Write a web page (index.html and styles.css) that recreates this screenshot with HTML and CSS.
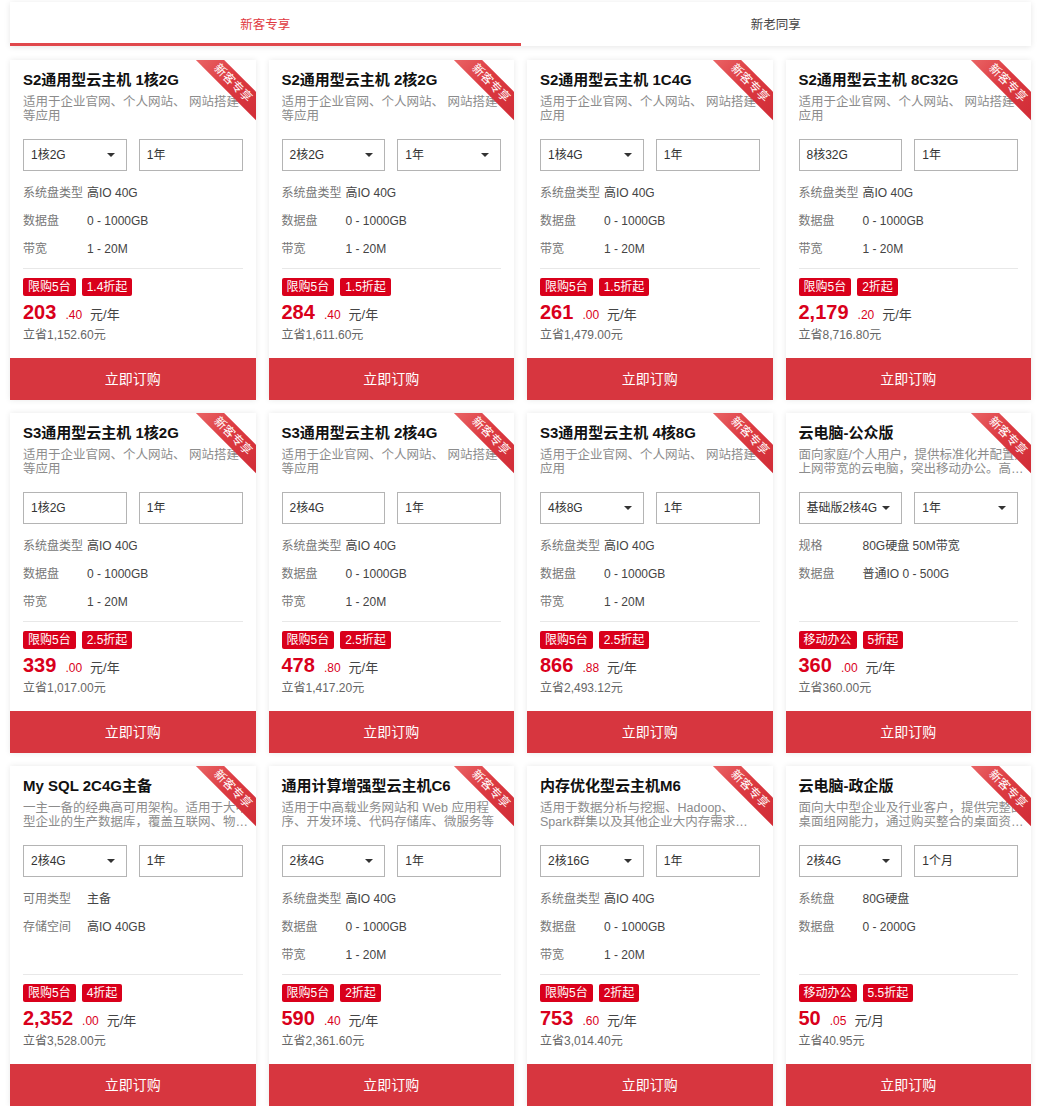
FILE: index.html
```html
<!DOCTYPE html>
<html lang="zh-CN">
<head>
    <meta charset="UTF-8">
    <meta name="viewport" content="width=device-width, initial-scale=1.0">
    <title>云产品特惠</title>
    <link rel="stylesheet" href="styles.css">
</head>
<body>
    <div class="container">
        <!-- 标签页 -->
        <div class="tabs">
            <div class="tab active">新客专享</div>
            <div class="tab">新老同享</div>
        </div>

        <div class="product-grid">
            <!-- S2 1核2G -->
            <div class="card">
                <span class="ribbon">新客专享</span>
                <div class="card-body">
                    <h3 class="card-title">S2通用型云主机 1核2G</h3>
                    <p class="card-desc">适用于企业官网、个人网站、 网站搭建等应用</p>
                    <div class="selects">
                        <div class="select has-arrow">1核2G</div>
                        <div class="select">1年</div>
                    </div>
                    <div class="specs">
                        <div class="spec"><span class="spec-label">系统盘类型</span><span class="spec-value">高IO 40G</span></div>
                        <div class="spec"><span class="spec-label">数据盘</span><span class="spec-value">0 - 1000GB</span></div>
                        <div class="spec"><span class="spec-label">带宽</span><span class="spec-value">1 - 20M</span></div>
                    </div>
                    <div class="price-box">
                        <div class="tags"><span class="tag">限购5台</span><span class="tag">1.4折起</span></div>
                        <div class="price"><span class="price-int">203</span><span class="price-dec">.40</span><span class="price-unit">元/年</span></div>
                        <div class="save">立省1,152.60元</div>
                    </div>
                </div>
                <a class="buy-btn" href="#">立即订购</a>
            </div>

            <!-- S2 2核2G -->
            <div class="card">
                <span class="ribbon">新客专享</span>
                <div class="card-body">
                    <h3 class="card-title">S2通用型云主机 2核2G</h3>
                    <p class="card-desc">适用于企业官网、个人网站、 网站搭建等应用</p>
                    <div class="selects">
                        <div class="select has-arrow">2核2G</div>
                        <div class="select has-arrow">1年</div>
                    </div>
                    <div class="specs">
                        <div class="spec"><span class="spec-label">系统盘类型</span><span class="spec-value">高IO 40G</span></div>
                        <div class="spec"><span class="spec-label">数据盘</span><span class="spec-value">0 - 1000GB</span></div>
                        <div class="spec"><span class="spec-label">带宽</span><span class="spec-value">1 - 20M</span></div>
                    </div>
                    <div class="price-box">
                        <div class="tags"><span class="tag">限购5台</span><span class="tag">1.5折起</span></div>
                        <div class="price"><span class="price-int">284</span><span class="price-dec">.40</span><span class="price-unit">元/年</span></div>
                        <div class="save">立省1,611.60元</div>
                    </div>
                </div>
                <a class="buy-btn" href="#">立即订购</a>
            </div>

            <!-- S2 1C4G -->
            <div class="card">
                <span class="ribbon">新客专享</span>
                <div class="card-body">
                    <h3 class="card-title">S2通用型云主机 1C4G</h3>
                    <p class="card-desc wide">适用于企业官网、个人网站、 网站搭建等应用</p>
                    <div class="selects">
                        <div class="select has-arrow">1核4G</div>
                        <div class="select">1年</div>
                    </div>
                    <div class="specs">
                        <div class="spec"><span class="spec-label">系统盘类型</span><span class="spec-value">高IO 40G</span></div>
                        <div class="spec"><span class="spec-label">数据盘</span><span class="spec-value">0 - 1000GB</span></div>
                        <div class="spec"><span class="spec-label">带宽</span><span class="spec-value">1 - 20M</span></div>
                    </div>
                    <div class="price-box">
                        <div class="tags"><span class="tag">限购5台</span><span class="tag">1.5折起</span></div>
                        <div class="price"><span class="price-int">261</span><span class="price-dec">.00</span><span class="price-unit">元/年</span></div>
                        <div class="save">立省1,479.00元</div>
                    </div>
                </div>
                <a class="buy-btn" href="#">立即订购</a>
            </div>

            <!-- S2 8C32G -->
            <div class="card">
                <span class="ribbon">新客专享</span>
                <div class="card-body">
                    <h3 class="card-title">S2通用型云主机 8C32G</h3>
                    <p class="card-desc wide">适用于企业官网、个人网站、 网站搭建等应用</p>
                    <div class="selects">
                        <div class="select">8核32G</div>
                        <div class="select">1年</div>
                    </div>
                    <div class="specs">
                        <div class="spec"><span class="spec-label">系统盘类型</span><span class="spec-value">高IO 40G</span></div>
                        <div class="spec"><span class="spec-label">数据盘</span><span class="spec-value">0 - 1000GB</span></div>
                        <div class="spec"><span class="spec-label">带宽</span><span class="spec-value">1 - 20M</span></div>
                    </div>
                    <div class="price-box">
                        <div class="tags"><span class="tag">限购5台</span><span class="tag">2折起</span></div>
                        <div class="price"><span class="price-int">2,179</span><span class="price-dec">.20</span><span class="price-unit">元/年</span></div>
                        <div class="save">立省8,716.80元</div>
                    </div>
                </div>
                <a class="buy-btn" href="#">立即订购</a>
            </div>

            <!-- S3 1核2G -->
            <div class="card">
                <span class="ribbon">新客专享</span>
                <div class="card-body">
                    <h3 class="card-title">S3通用型云主机 1核2G</h3>
                    <p class="card-desc">适用于企业官网、个人网站、 网站搭建等应用</p>
                    <div class="selects">
                        <div class="select">1核2G</div>
                        <div class="select">1年</div>
                    </div>
                    <div class="specs">
                        <div class="spec"><span class="spec-label">系统盘类型</span><span class="spec-value">高IO 40G</span></div>
                        <div class="spec"><span class="spec-label">数据盘</span><span class="spec-value">0 - 1000GB</span></div>
                        <div class="spec"><span class="spec-label">带宽</span><span class="spec-value">1 - 20M</span></div>
                    </div>
                    <div class="price-box">
                        <div class="tags"><span class="tag">限购5台</span><span class="tag">2.5折起</span></div>
                        <div class="price"><span class="price-int">339</span><span class="price-dec">.00</span><span class="price-unit">元/年</span></div>
                        <div class="save">立省1,017.00元</div>
                    </div>
                </div>
                <a class="buy-btn" href="#">立即订购</a>
            </div>

            <!-- S3 2核4G -->
            <div class="card">
                <span class="ribbon">新客专享</span>
                <div class="card-body">
                    <h3 class="card-title">S3通用型云主机 2核4G</h3>
                    <p class="card-desc">适用于企业官网、个人网站、 网站搭建等应用</p>
                    <div class="selects">
                        <div class="select">2核4G</div>
                        <div class="select">1年</div>
                    </div>
                    <div class="specs">
                        <div class="spec"><span class="spec-label">系统盘类型</span><span class="spec-value">高IO 40G</span></div>
                        <div class="spec"><span class="spec-label">数据盘</span><span class="spec-value">0 - 1000GB</span></div>
                        <div class="spec"><span class="spec-label">带宽</span><span class="spec-value">1 - 20M</span></div>
                    </div>
                    <div class="price-box">
                        <div class="tags"><span class="tag">限购5台</span><span class="tag">2.5折起</span></div>
                        <div class="price"><span class="price-int">478</span><span class="price-dec">.80</span><span class="price-unit">元/年</span></div>
                        <div class="save">立省1,417.20元</div>
                    </div>
                </div>
                <a class="buy-btn" href="#">立即订购</a>
            </div>

            <!-- S3 4核8G -->
            <div class="card">
                <span class="ribbon">新客专享</span>
                <div class="card-body">
                    <h3 class="card-title">S3通用型云主机 4核8G</h3>
                    <p class="card-desc wide">适用于企业官网、个人网站、 网站搭建等应用</p>
                    <div class="selects">
                        <div class="select has-arrow">4核8G</div>
                        <div class="select">1年</div>
                    </div>
                    <div class="specs">
                        <div class="spec"><span class="spec-label">系统盘类型</span><span class="spec-value">高IO 40G</span></div>
                        <div class="spec"><span class="spec-label">数据盘</span><span class="spec-value">0 - 1000GB</span></div>
                        <div class="spec"><span class="spec-label">带宽</span><span class="spec-value">1 - 20M</span></div>
                    </div>
                    <div class="price-box">
                        <div class="tags"><span class="tag">限购5台</span><span class="tag">2.5折起</span></div>
                        <div class="price"><span class="price-int">866</span><span class="price-dec">.88</span><span class="price-unit">元/年</span></div>
                        <div class="save">立省2,493.12元</div>
                    </div>
                </div>
                <a class="buy-btn" href="#">立即订购</a>
            </div>

            <!-- 云电脑 公众版 -->
            <div class="card">
                <span class="ribbon">新客专享</span>
                <div class="card-body">
                    <h3 class="card-title">云电脑-公众版</h3>
                    <p class="card-desc wide">面向家庭/个人用户，提供标准化并配置好上网带宽的云电脑，突出移动办公。高性价比，即开即用</p>
                    <div class="selects">
                        <div class="select has-arrow">基础版2核4G</div>
                        <div class="select has-arrow">1年</div>
                    </div>
                    <div class="specs">
                        <div class="spec"><span class="spec-label">规格</span><span class="spec-value">80G硬盘 50M带宽</span></div>
                        <div class="spec"><span class="spec-label">数据盘</span><span class="spec-value">普通IO 0 - 500G</span></div>
                    </div>
                    <div class="price-box">
                        <div class="tags"><span class="tag">移动办公</span><span class="tag">5折起</span></div>
                        <div class="price"><span class="price-int">360</span><span class="price-dec">.00</span><span class="price-unit">元/年</span></div>
                        <div class="save">立省360.00元</div>
                    </div>
                </div>
                <a class="buy-btn" href="#">立即订购</a>
            </div>

            <!-- MySQL -->
            <div class="card">
                <span class="ribbon">新客专享</span>
                <div class="card-body">
                    <h3 class="card-title">My SQL 2C4G主备</h3>
                    <p class="card-desc wide">一主一备的经典高可用架构。适用于大中型企业的生产数据库，覆盖互联网、物联网、零售电商等行业</p>
                    <div class="selects">
                        <div class="select has-arrow">2核4G</div>
                        <div class="select">1年</div>
                    </div>
                    <div class="specs">
                        <div class="spec"><span class="spec-label">可用类型</span><span class="spec-value">主备</span></div>
                        <div class="spec"><span class="spec-label">存储空间</span><span class="spec-value">高IO 40GB</span></div>
                    </div>
                    <div class="price-box">
                        <div class="tags"><span class="tag">限购5台</span><span class="tag">4折起</span></div>
                        <div class="price"><span class="price-int">2,352</span><span class="price-dec">.00</span><span class="price-unit">元/年</span></div>
                        <div class="save">立省3,528.00元</div>
                    </div>
                </div>
                <a class="buy-btn" href="#">立即订购</a>
            </div>

            <!-- C6 -->
            <div class="card">
                <span class="ribbon">新客专享</span>
                <div class="card-body">
                    <h3 class="card-title">通用计算增强型云主机C6</h3>
                    <p class="card-desc">适用于中高载业务网站和 Web 应用程序、开发环境、代码存储库、微服务等</p>
                    <div class="selects">
                        <div class="select has-arrow">2核4G</div>
                        <div class="select">1年</div>
                    </div>
                    <div class="specs">
                        <div class="spec"><span class="spec-label">系统盘类型</span><span class="spec-value">高IO 40G</span></div>
                        <div class="spec"><span class="spec-label">数据盘</span><span class="spec-value">0 - 1000GB</span></div>
                        <div class="spec"><span class="spec-label">带宽</span><span class="spec-value">1 - 20M</span></div>
                    </div>
                    <div class="price-box">
                        <div class="tags"><span class="tag">限购5台</span><span class="tag">2折起</span></div>
                        <div class="price"><span class="price-int">590</span><span class="price-dec">.40</span><span class="price-unit">元/年</span></div>
                        <div class="save">立省2,361.60元</div>
                    </div>
                </div>
                <a class="buy-btn" href="#">立即订购</a>
            </div>

            <!-- M6 -->
            <div class="card">
                <span class="ribbon">新客专享</span>
                <div class="card-body">
                    <h3 class="card-title">内存优化型云主机M6</h3>
                    <p class="card-desc">适用于数据分析与挖掘、Hadoop、Spark群集以及其他企业大内存需求等场景</p>
                    <div class="selects">
                        <div class="select has-arrow">2核16G</div>
                        <div class="select">1年</div>
                    </div>
                    <div class="specs">
                        <div class="spec"><span class="spec-label">系统盘类型</span><span class="spec-value">高IO 40G</span></div>
                        <div class="spec"><span class="spec-label">数据盘</span><span class="spec-value">0 - 1000GB</span></div>
                        <div class="spec"><span class="spec-label">带宽</span><span class="spec-value">1 - 20M</span></div>
                    </div>
                    <div class="price-box">
                        <div class="tags"><span class="tag">限购5台</span><span class="tag">2折起</span></div>
                        <div class="price"><span class="price-int">753</span><span class="price-dec">.60</span><span class="price-unit">元/年</span></div>
                        <div class="save">立省3,014.40元</div>
                    </div>
                </div>
                <a class="buy-btn" href="#">立即订购</a>
            </div>

            <!-- 云电脑 政企版 -->
            <div class="card">
                <span class="ribbon">新客专享</span>
                <div class="card-body">
                    <h3 class="card-title">云电脑-政企版</h3>
                    <p class="card-desc wide">面向大中型企业及行业客户，提供完整的桌面组网能力，通过购买整合的桌面资源实现集中管控</p>
                    <div class="selects">
                        <div class="select has-arrow">2核4G</div>
                        <div class="select">1个月</div>
                    </div>
                    <div class="specs">
                        <div class="spec"><span class="spec-label">系统盘</span><span class="spec-value">80G硬盘</span></div>
                        <div class="spec"><span class="spec-label">数据盘</span><span class="spec-value">0 - 2000G</span></div>
                    </div>
                    <div class="price-box">
                        <div class="tags"><span class="tag">移动办公</span><span class="tag">5.5折起</span></div>
                        <div class="price"><span class="price-int">50</span><span class="price-dec">.05</span><span class="price-unit">元/月</span></div>
                        <div class="save">立省40.95元</div>
                    </div>
                </div>
                <a class="buy-btn" href="#">立即订购</a>
            </div>
        </div>
    </div>
</body>
</html>
```

FILE: styles.css
```css
* {
    margin: 0;
    padding: 0;
    box-sizing: border-box;
}

body {
    font-family: "Liberation Sans", "Noto Sans CJK SC", sans-serif;
    background: #fff;
    color: #333;
    font-size: 12px;
}

.container {
    width: 1021px;
    margin-left: 10px;
    padding-top: 2px;
}

/* 标签页 */
.tabs {
    display: flex;
    height: 44px;
    background: #fff;
    box-shadow: 0 1px 6px rgba(0, 0, 0, 0.1);
}

.tab {
    flex: 1;
    text-align: center;
    font-size: 12.5px;
    color: #444;
    border-bottom: 3px solid transparent;
    line-height: 47px;
}

.tab.active {
    color: #e0383f;
    border-bottom-color: #e0484c;
}

/* 产品卡片 */
.product-grid {
    display: grid;
    grid-template-columns: repeat(4, 1fr);
    gap: 13px;
    margin-top: 14px;
}

.card {
    position: relative;
    overflow: hidden;
    background: #fff;
    box-shadow: 0 0 6px rgba(0, 0, 0, 0.09);
}

.ribbon {
    position: absolute;
    top: 13px;
    right: -27px;
    width: 100px;
    height: 20px;
    line-height: 20px;
    text-align: center;
    color: #fff;
    font-size: 12px;
    transform: rotate(45deg);
    background: linear-gradient(90deg, #ec6c6c 0%, #dc3a41 45%, #cf2a35 100%);
    z-index: 2;
}

.card-body {
    padding: 10px 13px 15px;
}

.card-title {
    font-size: 15px;
    font-weight: bold;
    line-height: 20px;
    color: #111;
}

.card-desc {
    margin-top: 5px;
    font-size: 12.5px;
    line-height: 14px;
    height: 28px;
    color: #8c8c8c;
    display: -webkit-box;
    -webkit-line-clamp: 2;
    -webkit-box-orient: vertical;
    overflow: hidden;
}

.card-desc.wide {
    margin-right: -10px;
}

.selects {
    display: grid;
    grid-template-columns: 1fr 1fr;
    gap: 12px;
    margin-top: 16px;
}

.select {
    position: relative;
    height: 32px;
    line-height: 30px;
    border: 1px solid #b4b4b4;
    padding-left: 7px;
    font-size: 12px;
    color: #333;
}

.select.has-arrow::after {
    content: "";
    position: absolute;
    right: 11px;
    top: 13px;
    border-left: 4px solid transparent;
    border-right: 4px solid transparent;
    border-top: 4px solid #333;
}

.specs {
    margin-top: 8px;
    height: 89px;
}

.spec {
    display: flex;
    height: 28px;
    line-height: 29px;
    font-size: 12px;
}

.spec-label {
    width: 64px;
    color: #777;
}

.spec-value {
    color: #444;
}

.price-box {
    border-top: 1px solid #e8e8e8;
    padding-top: 9px;
}

.tags {
    display: flex;
    gap: 6px;
}

.tag {
    height: 18px;
    line-height: 18px;
    padding: 0 5px;
    border-radius: 2px;
    background: #d9001b;
    color: #fff;
    font-size: 12px;
}

.price {
    margin-top: 3px;
    height: 26px;
    line-height: 26px;
    color: #d9001b;
    white-space: nowrap;
}

.price-int {
    font-size: 20px;
    font-weight: bold;
}

.price-dec {
    font-size: 12px;
    margin-left: 9px;
}

.price-unit {
    font-size: 13px;
    color: #444;
    margin-left: 8px;
}

.save {
    margin-top: 2px;
    line-height: 16px;
    font-size: 12px;
    color: #666;
}

.buy-btn {
    display: block;
    height: 42px;
    line-height: 42px;
    text-align: center;
    background: #d7363f;
    color: #fff;
    font-size: 14px;
    text-decoration: none;
}
```
